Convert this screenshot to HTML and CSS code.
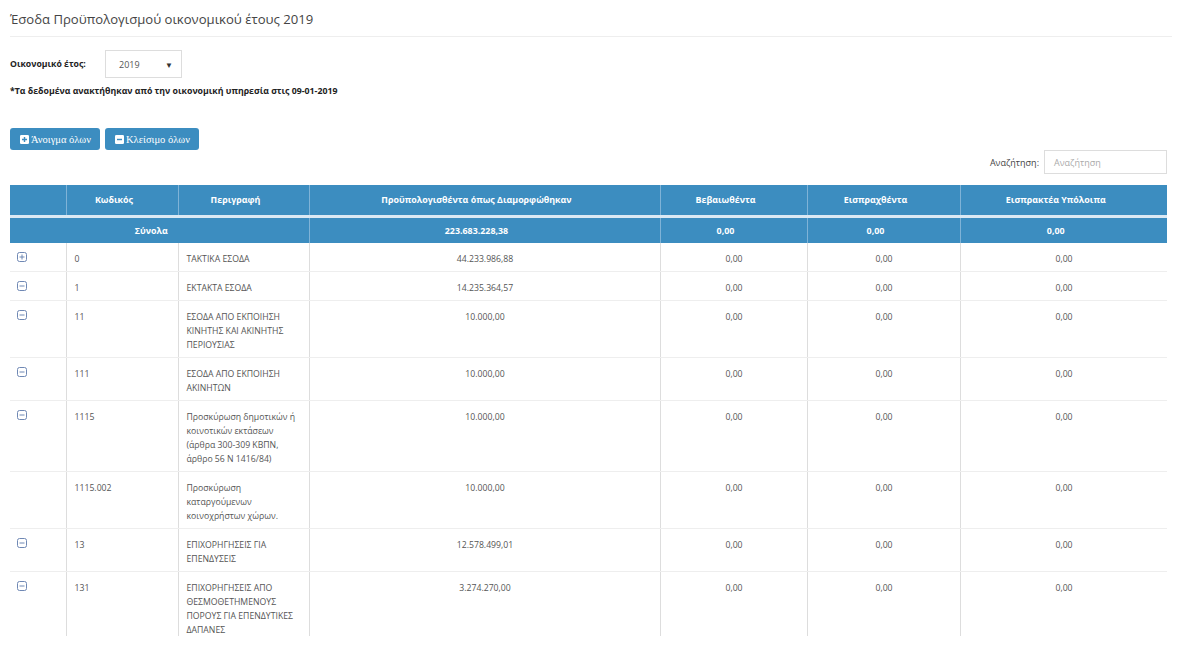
FILE: index.html
```html
<!DOCTYPE html>
<html lang="el">
<head>
<meta charset="utf-8">
<title>Έσοδα Προϋπολογισμού</title>
<link rel="stylesheet" href="styles.css">
</head>
<body>
<div class="page">
  <h1 class="title">Έσοδα Προϋπολογισμού οικονομικού έτους 2019</h1>
  <div class="year-row">
    <label class="year-label">Οικονομικό έτος:</label>
    <div class="select"><span>2019</span><span class="caret">▼</span></div>
  </div>
  <p class="note">*Τα δεδομένα ανακτήθηκαν από την οικονομική υπηρεσία στις 09-01-2019</p>
  <div class="actions">
    <button class="btn"><svg class="bicon" viewBox="0 0 10 10"><rect x="0" y="0" width="10" height="10" rx="1.5" fill="#fff"/><path d="M5 2.2v5.6M2.2 5h5.6" stroke="#3c8dc0" stroke-width="1.6"/></svg>Άνοιγμα όλων</button>
    <button class="btn"><svg class="bicon" viewBox="0 0 10 10"><rect x="0" y="0" width="10" height="10" rx="1.5" fill="#fff"/><path d="M2.2 5h5.6" stroke="#3c8dc0" stroke-width="1.6"/></svg>Κλείσιμο όλων</button>
  </div>
  <div class="search-row">
    <label class="search-label">Αναζήτηση:</label>
    <div class="search-input">Αναζήτηση</div>
  </div>
  <div class="table-wrap">
    <table class="grid">
      <colgroup>
        <col style="width:56px"><col style="width:112px"><col style="width:131px"><col style="width:351px"><col style="width:147px"><col style="width:153px"><col style="width:207px">
      </colgroup>
      <thead>
        <tr class="head">
          <th></th><th>Κωδικός</th><th>Περιγραφή</th><th>Προϋπολογισθέντα όπως Διαμορφώθηκαν</th><th>Βεβαιωθέντα</th><th>Εισπραχθέντα</th><th>Εισπρακτέα Υπόλοιπα</th>
        </tr>
        <tr class="totals">
          <th colspan="3">Σύνολα</th><th>223.683.228,38</th><th>0,00</th><th>0,00</th><th>0,00</th>
        </tr>
      </thead>
      <tbody>
        <tr><td class="ic"><svg class="ticon" viewBox="0 0 10 10"><rect x="0.5" y="0.5" width="9" height="9" rx="2" fill="none" stroke="#6f88b4"/><path d="M5 2.5v5M2.5 5h5" stroke="#6f88b4"/></svg></td><td>0</td><td>ΤΑΚΤΙΚΑ ΕΣΟΔΑ</td><td class="n">44.233.986,88</td><td class="n">0,00</td><td class="n">0,00</td><td class="n">0,00</td></tr>
        <tr><td class="ic"><svg class="ticon" viewBox="0 0 10 10"><rect x="0.5" y="0.5" width="9" height="9" rx="2" fill="none" stroke="#6f88b4"/><path d="M2.5 5h5" stroke="#6f88b4"/></svg></td><td>1</td><td>ΕΚΤΑΚΤΑ ΕΣΟΔΑ</td><td class="n">14.235.364,57</td><td class="n">0,00</td><td class="n">0,00</td><td class="n">0,00</td></tr>
        <tr><td class="ic"><svg class="ticon" viewBox="0 0 10 10"><rect x="0.5" y="0.5" width="9" height="9" rx="2" fill="none" stroke="#6f88b4"/><path d="M2.5 5h5" stroke="#6f88b4"/></svg></td><td>11</td><td>ΕΣΟΔΑ ΑΠΟ ΕΚΠΟΙΗΣΗ ΚΙΝΗΤΗΣ ΚΑΙ ΑΚΙΝΗΤΗΣ ΠΕΡΙΟΥΣΙΑΣ</td><td class="n">10.000,00</td><td class="n">0,00</td><td class="n">0,00</td><td class="n">0,00</td></tr>
        <tr><td class="ic"><svg class="ticon" viewBox="0 0 10 10"><rect x="0.5" y="0.5" width="9" height="9" rx="2" fill="none" stroke="#6f88b4"/><path d="M2.5 5h5" stroke="#6f88b4"/></svg></td><td>111</td><td>ΕΣΟΔΑ ΑΠΟ ΕΚΠΟΙΗΣΗ ΑΚΙΝΗΤΩΝ</td><td class="n">10.000,00</td><td class="n">0,00</td><td class="n">0,00</td><td class="n">0,00</td></tr>
        <tr><td class="ic"><svg class="ticon" viewBox="0 0 10 10"><rect x="0.5" y="0.5" width="9" height="9" rx="2" fill="none" stroke="#6f88b4"/><path d="M2.5 5h5" stroke="#6f88b4"/></svg></td><td>1115</td><td>Προσκύρωση δημοτικών ή κοινοτικών εκτάσεων (άρθρα 300-309 ΚΒΠΝ, άρθρο 56 Ν 1416/84)</td><td class="n">10.000,00</td><td class="n">0,00</td><td class="n">0,00</td><td class="n">0,00</td></tr>
        <tr><td class="ic"></td><td>1115.002</td><td>Προσκύρωση καταργούμενων κοινοχρήστων χώρων.</td><td class="n">10.000,00</td><td class="n">0,00</td><td class="n">0,00</td><td class="n">0,00</td></tr>
        <tr><td class="ic"><svg class="ticon" viewBox="0 0 10 10"><rect x="0.5" y="0.5" width="9" height="9" rx="2" fill="none" stroke="#6f88b4"/><path d="M2.5 5h5" stroke="#6f88b4"/></svg></td><td>13</td><td>ΕΠΙΧΟΡΗΓΗΣΕΙΣ ΓΙΑ ΕΠΕΝΔΥΣΕΙΣ</td><td class="n">12.578.499,01</td><td class="n">0,00</td><td class="n">0,00</td><td class="n">0,00</td></tr>
        <tr><td class="ic"><svg class="ticon" viewBox="0 0 10 10"><rect x="0.5" y="0.5" width="9" height="9" rx="2" fill="none" stroke="#6f88b4"/><path d="M2.5 5h5" stroke="#6f88b4"/></svg></td><td>131</td><td>ΕΠΙΧΟΡΗΓΗΣΕΙΣ ΑΠΟ ΘΕΣΜΟΘΕΤΗΜΕΝΟΥΣ ΠΟΡΟΥΣ ΓΙΑ ΕΠΕΝΔΥΤΙΚΕΣ ΔΑΠΑΝΕΣ</td><td class="n">3.274.270,00</td><td class="n">0,00</td><td class="n">0,00</td><td class="n">0,00</td></tr>
      </tbody>
    </table>
  </div>
</div>
</body>
</html>
```

FILE: styles.css
```css
* { box-sizing: border-box; }
html, body { margin: 0; padding: 0; background: #fff; }
body { font-family: "Open Sans", "Noto Sans", sans-serif; color: #444; }
.page { padding: 0 20px 0 10px; }
.title {
  margin: 0 -5px 0 0;
  padding: 10px 0 8px;
  font-size: 13.1px;
  font-weight: 400;
  color: #444;
  line-height: 18px;
  border-bottom: 1px solid #eee;
}
.year-row { display: flex; align-items: center; margin-top: 13px; }
.year-label { font-size: 8.7px; font-weight: 700; color: #222; width: 95px; }
.select {
  width: 77px; height: 28px; border: 1px solid #ddd;
  display: flex; align-items: center; justify-content: space-between;
  padding: 0 8px 0 13px; font-size: 9px; color: #555;
}
.caret { font-size: 8px; color: #333; }
.note { margin: 7px 0 0; font-size: 8.75px; font-weight: 700; color: #222; line-height: 12px; }
.actions { display: flex; gap: 5px; margin-top: 31px; }
.btn {
  height: 22px; border: 0; border-radius: 3px; background: #3c8dc0; color: #fff;
  font-family: "Liberation Serif", serif; font-size: 10.5px; padding: 0 9px 0 10px;
  display: flex; align-items: center; gap: 2px;
}
.bicon { width: 9px; height: 9px; }
.search-row { display: flex; justify-content: flex-end; align-items: center; gap: 5px; margin-top: 0; }
.search-label { font-size: 9px; color: #444; }
.search-input {
  width: 123px; height: 24px; border: 1px solid #ddd; font-size: 9px; color: #aaa;
  padding: 0 9px; display: flex; align-items: center;
}
.table-wrap { margin-top: 11px; height: 451px; overflow: hidden; }
.grid { width: 1157px; border-collapse: collapse; table-layout: fixed; font-size: 8.7px; }
.grid th { background: #3c8dc0; color: #fff; font-weight: 700; font-size: 8.9px; padding: 0 23px 0 7px; text-align: center; border-left: 1px solid #7fb3d7; }
.grid th:first-child { border-left: 0; }
.grid tr.head th { height: 31px; border-bottom: 3px solid #dbe9f4; }
.grid tr.totals th { height: 27px; }
.grid td { padding: 9px 7px 5px 8px; line-height: 14px; vertical-align: top; border-left: 1px solid #ddd; border-bottom: 1px solid #eee; color: #555; }
.grid td:first-child { border-left: 0; padding-left: 7px; }
.grid td:last-child { border-right: 1px solid #eee; }
.grid td.n { text-align: center; }
.ticon { width: 10px; height: 10px; display: block; margin-top: 0; }
```
